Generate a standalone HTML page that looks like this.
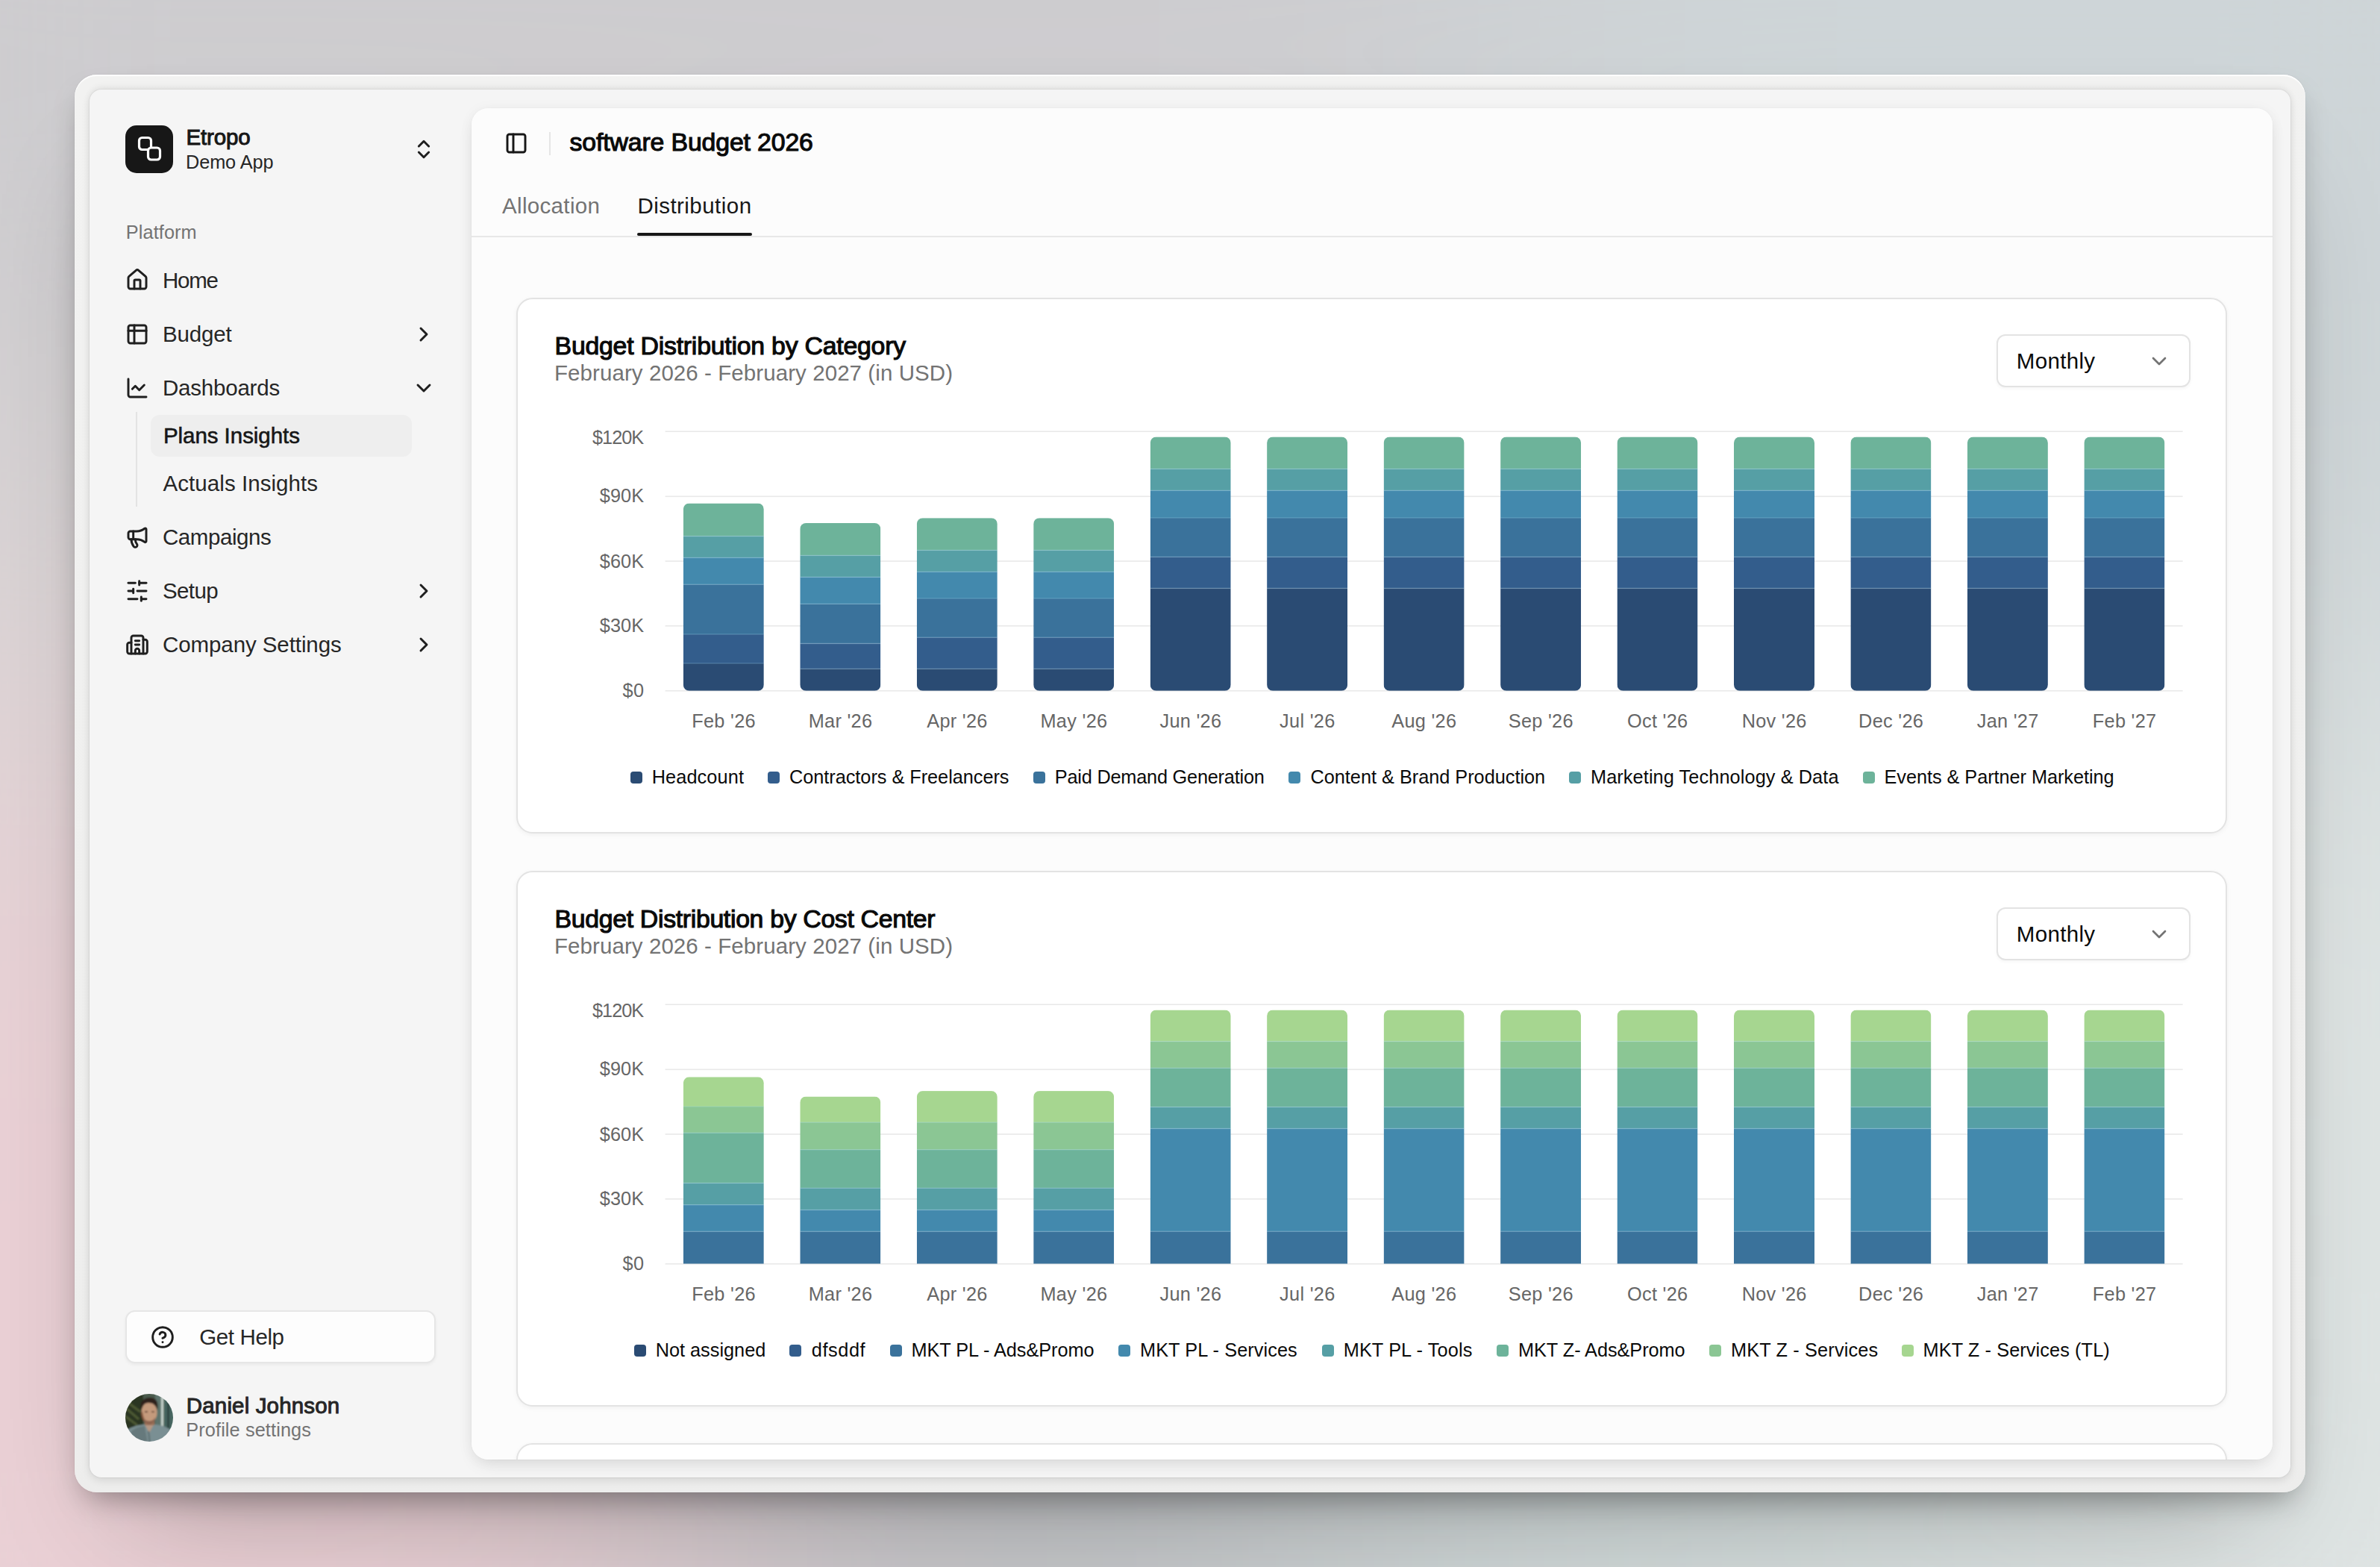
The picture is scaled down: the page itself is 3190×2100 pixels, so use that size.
<!DOCTYPE html>
<html><head><meta charset="utf-8"><title>software Budget 2026</title>
<style>
html,body{margin:0;padding:0}
body{width:3190px;height:2100px;overflow:hidden;position:relative;font-family:"Liberation Sans", sans-serif;background:#d2d1d3}
.bg{position:absolute;left:0;top:0;width:3190px;height:2100px}
.abs,.t,.ic{position:absolute}
.t{white-space:nowrap;line-height:1;font-family:"Liberation Sans", sans-serif}
.frame{position:absolute;left:100px;top:100px;width:2990px;height:1900px;border-radius:30px;
 background:linear-gradient(180deg,#f2f2f1,#ededec);box-shadow:inset 0 2px 1px rgba(255,255,255,0.9), 0 20px 40px -14px rgba(0,0,0,0.36), 0 90px 160px -70px rgba(0,0,0,0.28), 0 0 0 1px rgba(0,0,0,0.03)}
.win{position:absolute;left:120px;top:120px;width:2950px;height:1860px;border-radius:16px;background:#f5f5f5;
 box-shadow:0 0 0 1px rgba(0,0,0,0.04), 0 -4px 10px rgba(0,0,0,0.05), 0 4px 12px rgba(0,0,0,0.10)}
.main{position:absolute;left:632px;top:145px;width:2414px;height:1811px;border-radius:22px;background:#fcfcfc;overflow:hidden;
 }
.mainsh{position:absolute;left:632px;top:145px;width:2414px;height:1811px;border-radius:22px;
 box-shadow:0 2px 20px rgba(0,0,0,0.045), 0 10px 24px -6px rgba(0,0,0,0.11), 0 0 0 1px rgba(0,0,0,0.015)}
.card{position:absolute;box-sizing:border-box;background:#fff;border:2px solid #e3e3e3;border-radius:22px;
 box-shadow:0 2px 6px rgba(0,0,0,0.05)}
.dd{position:absolute;box-sizing:border-box;background:#fff;border:2px solid #e3e3e3;border-radius:12px;box-shadow:0 2px 4px rgba(0,0,0,0.04)}
</style></head><body>
<svg class="bg" viewBox="0 0 3190 2100" preserveAspectRatio="none">
<defs><filter id="bl" x="-20%" y="-20%" width="140%" height="140%"><feGaussianBlur stdDeviation="260"/></filter></defs>
<rect width="3190" height="2100" fill="#d1d0d2"/>
<g filter="url(#bl)">
<rect x="-400" y="-400" width="2400" height="900" fill="#cdcccf"/>
<rect x="2000" y="-400" width="1600" height="1300" fill="#ced5d8"/>
<rect x="-400" y="600" width="1300" height="500" fill="#dcd5d6"/>
<rect x="-400" y="1100" width="1300" height="1500" fill="#ebd0d5"/>
<rect x="900" y="1700" width="900" height="800" fill="#c3c5c8"/>
<rect x="1800" y="1700" width="900" height="800" fill="#d2dcdb"/>
<rect x="2600" y="900" width="1000" height="1600" fill="#dfe5e4"/>
</g></svg>
<div class="frame"></div>
<div class="win"></div>
<div class="abs" style="left:168px;top:168px;width:64px;height:64px;border-radius:15px;background:#171717"></div>
<svg class="ic" style="left:168px;top:168px;width:64px;height:64px" viewBox="0 0 64 64"><rect x="18.5" y="16.5" width="16" height="16" rx="4" fill="#171717" stroke="#fff" stroke-width="3.2"/><rect x="30.5" y="30" width="16" height="16" rx="4" fill="#171717" stroke="#fff" stroke-width="3.2"/></svg>
<div class="t" style="left:249.50px;top:168.93px;font-size:29.5px;color:#171717;font-weight:normal;letter-spacing:-0.176px;-webkit-text-stroke:1.00px #171717;">Etropo</div>
<div class="t" style="left:249.00px;top:204.58px;font-size:25.3px;color:#262626;font-weight:normal;letter-spacing:-0.096px;">Demo App</div>
<svg class="ic" style="left:551.5px;top:184.0px;width:32px;height:32px" viewBox="0 0 24 24" fill="none" stroke="#1f1f1f" stroke-width="2.2" stroke-linecap="round" stroke-linejoin="round"><path d="m7 15 5 5 5-5"/><path d="m7 9 5-5 5 5"/></svg>
<div class="t" style="left:168.80px;top:299.38px;font-size:25.3px;color:#737373;font-weight:normal;letter-spacing:0.100px;">Platform</div>
<svg class="ic" style="left:168.0px;top:359.2px;width:32px;height:32px" viewBox="0 0 24 24" fill="none" stroke="#1f1f1f" stroke-width="2.2" stroke-linecap="round" stroke-linejoin="round"><path d="M15 21v-8a1 1 0 0 0-1-1h-4a1 1 0 0 0-1 1v8"/><path d="M3 10a2 2 0 0 1 .709-1.528l7-5.999a2 2 0 0 1 2.582 0l7 5.999A2 2 0 0 1 21 10v9a2 2 0 0 1-2 2H5a2 2 0 0 1-2-2z"/></svg>
<div class="t" style="left:218.00px;top:361.03px;font-size:29.5px;color:#262626;font-weight:normal;letter-spacing:-1.250px;">Home</div>
<svg class="ic" style="left:168.0px;top:432.0px;width:32px;height:32px" viewBox="0 0 24 24" fill="none" stroke="#1f1f1f" stroke-width="2.2" stroke-linecap="round" stroke-linejoin="round"><rect x="3" y="3" width="18" height="18" rx="2"/><path d="M3 8.5h18"/><path d="M9 3v18"/></svg>
<div class="t" style="left:218.00px;top:433.03px;font-size:29.5px;color:#262626;font-weight:normal;letter-spacing:-0.160px;">Budget</div>
<svg class="ic" style="left:551.5px;top:432.0px;width:32px;height:32px" viewBox="0 0 24 24" fill="none" stroke="#1f1f1f" stroke-width="2.2" stroke-linecap="round" stroke-linejoin="round"><path d="m9 18 6-6-6-6"/></svg>
<svg class="ic" style="left:168.0px;top:503.5px;width:32px;height:32px" viewBox="0 0 24 24" fill="none" stroke="#1f1f1f" stroke-width="2.2" stroke-linecap="round" stroke-linejoin="round"><path d="M3 3v16a2 2 0 0 0 2 2h16"/><path d="m19 9-5 5-4-4-3 3"/></svg>
<div class="t" style="left:218.00px;top:504.53px;font-size:29.5px;color:#262626;font-weight:normal;letter-spacing:-0.214px;">Dashboards</div>
<svg class="ic" style="left:551.5px;top:503.5px;width:32px;height:32px" viewBox="0 0 24 24" fill="none" stroke="#1f1f1f" stroke-width="2.2" stroke-linecap="round" stroke-linejoin="round"><path d="m6 9 6 6 6-6"/></svg>
<svg class="ic" style="left:168.0px;top:703.5px;width:32px;height:32px" viewBox="0 0 24 24" fill="none" stroke="#1f1f1f" stroke-width="2.2" stroke-linecap="round" stroke-linejoin="round"><path d="M11 6a13 13 0 0 0 8.4-2.8A1 1 0 0 1 21 4v12a1 1 0 0 1-1.6.8A13 13 0 0 0 11 14H5a2 2 0 0 1-2-2V8a2 2 0 0 1 2-2z"/><path d="M6 14a12 12 0 0 0 2.4 7.2 2 2 0 0 0 3.2-2.4A8 8 0 0 1 10 14"/><path d="M8 6v8"/></svg>
<div class="t" style="left:218.00px;top:704.53px;font-size:29.5px;color:#262626;font-weight:normal;letter-spacing:-0.431px;">Campaigns</div>
<svg class="ic" style="left:168.0px;top:776.0px;width:32px;height:32px" viewBox="0 0 24 24" fill="none" stroke="#1f1f1f" stroke-width="2.2" stroke-linecap="round" stroke-linejoin="round"><path d="M21 4h-7"/><path d="M10 4H3"/><path d="M21 12h-9"/><path d="M8 12H3"/><path d="M21 20h-5"/><path d="M12 20H3"/><path d="M14 2v4"/><path d="M8 10v4"/><path d="M16 18v4"/></svg>
<div class="t" style="left:218.00px;top:777.03px;font-size:29.5px;color:#262626;font-weight:normal;letter-spacing:-0.606px;">Setup</div>
<svg class="ic" style="left:551.5px;top:776.0px;width:32px;height:32px" viewBox="0 0 24 24" fill="none" stroke="#1f1f1f" stroke-width="2.2" stroke-linecap="round" stroke-linejoin="round"><path d="m9 18 6-6-6-6"/></svg>
<svg class="ic" style="left:168.0px;top:847.5px;width:32px;height:32px" viewBox="0 0 24 24" fill="none" stroke="#1f1f1f" stroke-width="2.2" stroke-linecap="round" stroke-linejoin="round"><path d="M10 12h4"/><path d="M10 8h4"/><path d="M14 21v-3a2 2 0 0 0-4 0v3"/><path d="M6 10H4a2 2 0 0 0-2 2v7a2 2 0 0 0 2 2h16a2 2 0 0 0 2-2V9a2 2 0 0 0-2-2h-2"/><path d="M6 21V5a2 2 0 0 1 2-2h8a2 2 0 0 1 2 2v16"/></svg>
<div class="t" style="left:218.00px;top:848.53px;font-size:29.5px;color:#262626;font-weight:normal;letter-spacing:-0.087px;">Company Settings</div>
<svg class="ic" style="left:551.5px;top:847.5px;width:32px;height:32px" viewBox="0 0 24 24" fill="none" stroke="#1f1f1f" stroke-width="2.2" stroke-linecap="round" stroke-linejoin="round"><path d="m9 18 6-6-6-6"/></svg>
<div class="abs" style="left:182px;top:552px;width:2px;height:127px;background:#e3e3e3"></div>
<div class="abs" style="left:202px;top:556px;width:350px;height:56px;border-radius:12px;background:#eeeeee"></div>
<div class="t" style="left:218.89px;top:569.03px;font-size:29.5px;color:#171717;font-weight:normal;letter-spacing:-0.040px;-webkit-text-stroke:0.59px #171717;">Plans Insights</div>
<div class="t" style="left:218.60px;top:633.03px;font-size:29.5px;color:#262626;font-weight:normal;letter-spacing:0.052px;">Actuals Insights</div>
<div class="abs" style="left:168px;top:1756px;width:416px;height:71px;box-sizing:border-box;border-radius:13px;background:#fdfdfd;border:2px solid #e6e6e6;box-shadow:0 2px 4px rgba(0,0,0,0.05)"></div>
<svg class="ic" style="left:202.0px;top:1776.0px;width:32px;height:32px" viewBox="0 0 24 24" fill="none" stroke="#1f1f1f" stroke-width="2.2" stroke-linecap="round" stroke-linejoin="round"><circle cx="12" cy="12" r="10"/><path d="M9.09 9a3 3 0 0 1 5.83 1c0 2-3 3-3 3"/><path d="M12 17h.01"/></svg>
<div class="t" style="left:267.20px;top:1776.83px;font-size:29.5px;color:#262626;font-weight:normal;letter-spacing:-0.368px;">Get Help</div>
<svg class="ic" style="left:168px;top:1868px;width:64px;height:64px" viewBox="0 0 64 64">
<defs><clipPath id="av"><circle cx="32" cy="32" r="32"/></clipPath>
<filter id="avb" x="-10%" y="-10%" width="120%" height="120%"><feGaussianBlur stdDeviation="0.9"/></filter></defs>
<g clip-path="url(#av)"><g filter="url(#avb)">
<rect x="-4" y="-4" width="72" height="72" fill="#4a5a4c"/>
<rect x="-4" y="-4" width="28" height="72" fill="#2b3422"/>
<path d="M2 20 L18 34 M0 30 L16 42 M4 12 L20 24" stroke="#4d5a34" stroke-width="3"/>
<rect x="40" y="-4" width="10" height="72" fill="#5d736c"/>
<rect x="48" y="4" width="3" height="40" fill="#c5d2cc"/>
<rect x="52" y="-4" width="16" height="72" fill="#476660"/>
<rect x="56" y="-4" width="3" height="72" fill="#2f4541"/>
<path d="M-2 66 L-2 52 C6 44 16 42 24 41 L40 41 C50 42 60 46 66 52 L66 66Z" fill="#7a8f93"/>
<path d="M4 66 L8 50 C14 45 20 44 26 43 L30 66Z" fill="#66797b"/>
<path d="M26 41 L32 52 L38 41Z" fill="#b69884"/>
<path d="M31 50 L33 66" stroke="#46575a" stroke-width="1.2"/>
<rect x="26" y="32" width="13" height="10" fill="#9d7258"/>
<ellipse cx="32" cy="25" rx="10.5" ry="14" fill="#c49a7c"/>
<path d="M21.5 25 C21 33 25 40 32 40 C27 38 24 32 23 24Z" fill="#87573c"/>
<path d="M24 31 C26 38 38 38 40 31 C40 37 36 41 32 41 C28 41 24 37 24 31Z" fill="#8d6450"/>
<path d="M20.5 22 C19 8 27 5 33 5 C41 5 45 10 43 22 C41 15 37 12 31 12 C26 12 23 15 20.5 22Z" fill="#2d211a"/>
<ellipse cx="28" cy="24" rx="2.2" ry="1" fill="#5a3a2a"/>
<ellipse cx="37" cy="24" rx="2.2" ry="1" fill="#6a4a3a"/>
</g></g></svg>
<div class="t" style="left:249.80px;top:1869.03px;font-size:29.5px;color:#262626;font-weight:normal;letter-spacing:0.156px;-webkit-text-stroke:1.00px #262626;">Daniel Johnson</div>
<div class="t" style="left:249.30px;top:1904.28px;font-size:25.3px;color:#737373;font-weight:normal;letter-spacing:0.112px;">Profile settings</div>
<div class="mainsh"></div>
<div class="main">
<svg class="ic" style="left:44.1px;top:30.7px;width:32px;height:32px" viewBox="0 0 24 24" fill="none" stroke="#171717" stroke-width="2.2" stroke-linecap="round" stroke-linejoin="round"><rect width="18" height="18" x="3" y="3" rx="2"/><path d="M9 3v18"/></svg>
<div class="abs" style="left:104px;top:32px;width:2px;height:31px;background:#e5e5e5"></div>
<div class="t" style="left:131.57px;top:29.19px;font-size:33.8px;color:#0a0a0a;font-weight:normal;letter-spacing:-0.133px;-webkit-text-stroke:1.15px #0a0a0a;">software Budget 2026</div>
<div class="t" style="left:41.00px;top:115.93px;font-size:29.5px;color:#737373;font-weight:normal;letter-spacing:0.336px;">Allocation</div>
<div class="t" style="left:222.40px;top:115.93px;font-size:29.5px;color:#171717;font-weight:normal;letter-spacing:0.464px;">Distribution</div>
<div class="abs" style="left:222px;top:167px;width:154px;height:4px;border-radius:2px;background:#171717"></div>
<div class="abs" style="left:0px;top:171px;width:100%;height:2px;background:#e8e8e8"></div>
<div class="card" style="left:60px;top:253.8px;width:2293px;height:718px"></div>
<div class="t" style="left:111.57px;top:302.09px;font-size:33.8px;color:#0a0a0a;font-weight:normal;letter-spacing:-0.222px;-webkit-text-stroke:1.15px #0a0a0a;">Budget Distribution by Category</div>
<div class="t" style="left:111.00px;top:339.73px;font-size:29.5px;color:#737373;font-weight:normal;letter-spacing:0.074px;">February 2026 - February 2027 (in USD)</div>
<div class="dd" style="left:2044px;top:303.0px;width:260px;height:71px"></div>
<div class="t" style="left:2070.80px;top:324.23px;font-size:29.5px;color:#0a0a0a;font-weight:normal;letter-spacing:0.325px;">Monthly</div>
<svg class="ic" style="left:2246.0px;top:323.0px;width:32px;height:32px" viewBox="0 0 24 24" fill="none" stroke="#737373" stroke-width="2" stroke-linecap="round" stroke-linejoin="round"><path d="m6 9 6 6 6-6"/></svg>
<svg class="ic" style="left:0;top:0;width:2414px;height:1812px;overflow:visible" viewBox="632 145 2414 1812">
<rect x="891.6" y="577.4" width="2034" height="1.6" fill="#e9e9e9"/>
<rect x="891.6" y="664.5" width="2034" height="1.6" fill="#e9e9e9"/>
<rect x="891.6" y="751.2" width="2034" height="1.6" fill="#e9e9e9"/>
<rect x="891.6" y="838.0" width="2034" height="1.6" fill="#e9e9e9"/>
<rect x="891.6" y="925.0" width="2034" height="1.6" fill="#e9e9e9"/>
<clipPath id="cb398_0"><rect x="915.8" y="674.5" width="108" height="251.3" rx="8"/></clipPath><g clip-path="url(#cb398_0)">
<rect x="915.8" y="674.5" width="108" height="44.1" fill="#6db39a"/>
<rect x="915.8" y="718.6" width="108" height="28.7" fill="#569fa5"/>
<rect x="915.8" y="747.3" width="108" height="35.9" fill="#4389ad"/>
<rect x="915.8" y="783.2" width="108" height="66.8" fill="#3a729b"/>
<rect x="915.8" y="850.0" width="108" height="39.0" fill="#335d8c"/>
<rect x="915.8" y="889.0" width="108" height="36.8" fill="#2a4b73"/>
<rect x="915.8" y="717.8" width="108" height="1.6" fill="#a8e0f5" fill-opacity="0.22"/>
<rect x="915.8" y="746.5" width="108" height="1.6" fill="#a8e0f5" fill-opacity="0.22"/>
<rect x="915.8" y="782.4" width="108" height="1.6" fill="#a8e0f5" fill-opacity="0.22"/>
<rect x="915.8" y="849.2" width="108" height="1.6" fill="#a8e0f5" fill-opacity="0.22"/>
<rect x="915.8" y="888.2" width="108" height="1.6" fill="#a8e0f5" fill-opacity="0.22"/>
</g>
<clipPath id="cb398_1"><rect x="1072.3" y="700.9" width="108" height="224.9" rx="8"/></clipPath><g clip-path="url(#cb398_1)">
<rect x="1072.3" y="700.9" width="108" height="43.5" fill="#6db39a"/>
<rect x="1072.3" y="744.4" width="108" height="29.0" fill="#569fa5"/>
<rect x="1072.3" y="773.4" width="108" height="35.9" fill="#4389ad"/>
<rect x="1072.3" y="809.3" width="108" height="53.1" fill="#3a729b"/>
<rect x="1072.3" y="862.4" width="108" height="33.9" fill="#335d8c"/>
<rect x="1072.3" y="896.3" width="108" height="29.5" fill="#2a4b73"/>
<rect x="1072.3" y="743.6" width="108" height="1.6" fill="#a8e0f5" fill-opacity="0.22"/>
<rect x="1072.3" y="772.6" width="108" height="1.6" fill="#a8e0f5" fill-opacity="0.22"/>
<rect x="1072.3" y="808.5" width="108" height="1.6" fill="#a8e0f5" fill-opacity="0.22"/>
<rect x="1072.3" y="861.6" width="108" height="1.6" fill="#a8e0f5" fill-opacity="0.22"/>
<rect x="1072.3" y="895.5" width="108" height="1.6" fill="#a8e0f5" fill-opacity="0.22"/>
</g>
<clipPath id="cb398_2"><rect x="1228.8" y="694.2" width="108" height="231.6" rx="8"/></clipPath><g clip-path="url(#cb398_2)">
<rect x="1228.8" y="694.2" width="108" height="43.2" fill="#6db39a"/>
<rect x="1228.8" y="737.4" width="108" height="28.9" fill="#569fa5"/>
<rect x="1228.8" y="766.3" width="108" height="35.7" fill="#4389ad"/>
<rect x="1228.8" y="802.0" width="108" height="52.2" fill="#3a729b"/>
<rect x="1228.8" y="854.2" width="108" height="42.1" fill="#335d8c"/>
<rect x="1228.8" y="896.3" width="108" height="29.5" fill="#2a4b73"/>
<rect x="1228.8" y="736.6" width="108" height="1.6" fill="#a8e0f5" fill-opacity="0.22"/>
<rect x="1228.8" y="765.5" width="108" height="1.6" fill="#a8e0f5" fill-opacity="0.22"/>
<rect x="1228.8" y="801.2" width="108" height="1.6" fill="#a8e0f5" fill-opacity="0.22"/>
<rect x="1228.8" y="853.4" width="108" height="1.6" fill="#a8e0f5" fill-opacity="0.22"/>
<rect x="1228.8" y="895.5" width="108" height="1.6" fill="#a8e0f5" fill-opacity="0.22"/>
</g>
<clipPath id="cb398_3"><rect x="1385.2" y="694.2" width="108" height="231.6" rx="8"/></clipPath><g clip-path="url(#cb398_3)">
<rect x="1385.2" y="694.2" width="108" height="43.2" fill="#6db39a"/>
<rect x="1385.2" y="737.4" width="108" height="28.9" fill="#569fa5"/>
<rect x="1385.2" y="766.3" width="108" height="35.7" fill="#4389ad"/>
<rect x="1385.2" y="802.0" width="108" height="52.2" fill="#3a729b"/>
<rect x="1385.2" y="854.2" width="108" height="42.1" fill="#335d8c"/>
<rect x="1385.2" y="896.3" width="108" height="29.5" fill="#2a4b73"/>
<rect x="1385.2" y="736.6" width="108" height="1.6" fill="#a8e0f5" fill-opacity="0.22"/>
<rect x="1385.2" y="765.5" width="108" height="1.6" fill="#a8e0f5" fill-opacity="0.22"/>
<rect x="1385.2" y="801.2" width="108" height="1.6" fill="#a8e0f5" fill-opacity="0.22"/>
<rect x="1385.2" y="853.4" width="108" height="1.6" fill="#a8e0f5" fill-opacity="0.22"/>
<rect x="1385.2" y="895.5" width="108" height="1.6" fill="#a8e0f5" fill-opacity="0.22"/>
</g>
<clipPath id="cb398_4"><rect x="1541.7" y="585.4" width="108" height="340.4" rx="8"/></clipPath><g clip-path="url(#cb398_4)">
<rect x="1541.7" y="585.4" width="108" height="43.0" fill="#6db39a"/>
<rect x="1541.7" y="628.4" width="108" height="28.9" fill="#569fa5"/>
<rect x="1541.7" y="657.3" width="108" height="36.7" fill="#4389ad"/>
<rect x="1541.7" y="694.0" width="108" height="52.3" fill="#3a729b"/>
<rect x="1541.7" y="746.3" width="108" height="42.1" fill="#335d8c"/>
<rect x="1541.7" y="788.4" width="108" height="137.4" fill="#2a4b73"/>
<rect x="1541.7" y="627.6" width="108" height="1.6" fill="#a8e0f5" fill-opacity="0.22"/>
<rect x="1541.7" y="656.5" width="108" height="1.6" fill="#a8e0f5" fill-opacity="0.22"/>
<rect x="1541.7" y="693.2" width="108" height="1.6" fill="#a8e0f5" fill-opacity="0.22"/>
<rect x="1541.7" y="745.5" width="108" height="1.6" fill="#a8e0f5" fill-opacity="0.22"/>
<rect x="1541.7" y="787.6" width="108" height="1.6" fill="#a8e0f5" fill-opacity="0.22"/>
</g>
<clipPath id="cb398_5"><rect x="1698.1" y="585.4" width="108" height="340.4" rx="8"/></clipPath><g clip-path="url(#cb398_5)">
<rect x="1698.1" y="585.4" width="108" height="43.0" fill="#6db39a"/>
<rect x="1698.1" y="628.4" width="108" height="28.9" fill="#569fa5"/>
<rect x="1698.1" y="657.3" width="108" height="36.7" fill="#4389ad"/>
<rect x="1698.1" y="694.0" width="108" height="52.3" fill="#3a729b"/>
<rect x="1698.1" y="746.3" width="108" height="42.1" fill="#335d8c"/>
<rect x="1698.1" y="788.4" width="108" height="137.4" fill="#2a4b73"/>
<rect x="1698.1" y="627.6" width="108" height="1.6" fill="#a8e0f5" fill-opacity="0.22"/>
<rect x="1698.1" y="656.5" width="108" height="1.6" fill="#a8e0f5" fill-opacity="0.22"/>
<rect x="1698.1" y="693.2" width="108" height="1.6" fill="#a8e0f5" fill-opacity="0.22"/>
<rect x="1698.1" y="745.5" width="108" height="1.6" fill="#a8e0f5" fill-opacity="0.22"/>
<rect x="1698.1" y="787.6" width="108" height="1.6" fill="#a8e0f5" fill-opacity="0.22"/>
</g>
<clipPath id="cb398_6"><rect x="1854.6" y="585.4" width="108" height="340.4" rx="8"/></clipPath><g clip-path="url(#cb398_6)">
<rect x="1854.6" y="585.4" width="108" height="43.0" fill="#6db39a"/>
<rect x="1854.6" y="628.4" width="108" height="28.9" fill="#569fa5"/>
<rect x="1854.6" y="657.3" width="108" height="36.7" fill="#4389ad"/>
<rect x="1854.6" y="694.0" width="108" height="52.3" fill="#3a729b"/>
<rect x="1854.6" y="746.3" width="108" height="42.1" fill="#335d8c"/>
<rect x="1854.6" y="788.4" width="108" height="137.4" fill="#2a4b73"/>
<rect x="1854.6" y="627.6" width="108" height="1.6" fill="#a8e0f5" fill-opacity="0.22"/>
<rect x="1854.6" y="656.5" width="108" height="1.6" fill="#a8e0f5" fill-opacity="0.22"/>
<rect x="1854.6" y="693.2" width="108" height="1.6" fill="#a8e0f5" fill-opacity="0.22"/>
<rect x="1854.6" y="745.5" width="108" height="1.6" fill="#a8e0f5" fill-opacity="0.22"/>
<rect x="1854.6" y="787.6" width="108" height="1.6" fill="#a8e0f5" fill-opacity="0.22"/>
</g>
<clipPath id="cb398_7"><rect x="2011.1" y="585.4" width="108" height="340.4" rx="8"/></clipPath><g clip-path="url(#cb398_7)">
<rect x="2011.1" y="585.4" width="108" height="43.0" fill="#6db39a"/>
<rect x="2011.1" y="628.4" width="108" height="28.9" fill="#569fa5"/>
<rect x="2011.1" y="657.3" width="108" height="36.7" fill="#4389ad"/>
<rect x="2011.1" y="694.0" width="108" height="52.3" fill="#3a729b"/>
<rect x="2011.1" y="746.3" width="108" height="42.1" fill="#335d8c"/>
<rect x="2011.1" y="788.4" width="108" height="137.4" fill="#2a4b73"/>
<rect x="2011.1" y="627.6" width="108" height="1.6" fill="#a8e0f5" fill-opacity="0.22"/>
<rect x="2011.1" y="656.5" width="108" height="1.6" fill="#a8e0f5" fill-opacity="0.22"/>
<rect x="2011.1" y="693.2" width="108" height="1.6" fill="#a8e0f5" fill-opacity="0.22"/>
<rect x="2011.1" y="745.5" width="108" height="1.6" fill="#a8e0f5" fill-opacity="0.22"/>
<rect x="2011.1" y="787.6" width="108" height="1.6" fill="#a8e0f5" fill-opacity="0.22"/>
</g>
<clipPath id="cb398_8"><rect x="2167.5" y="585.4" width="108" height="340.4" rx="8"/></clipPath><g clip-path="url(#cb398_8)">
<rect x="2167.5" y="585.4" width="108" height="43.0" fill="#6db39a"/>
<rect x="2167.5" y="628.4" width="108" height="28.9" fill="#569fa5"/>
<rect x="2167.5" y="657.3" width="108" height="36.7" fill="#4389ad"/>
<rect x="2167.5" y="694.0" width="108" height="52.3" fill="#3a729b"/>
<rect x="2167.5" y="746.3" width="108" height="42.1" fill="#335d8c"/>
<rect x="2167.5" y="788.4" width="108" height="137.4" fill="#2a4b73"/>
<rect x="2167.5" y="627.6" width="108" height="1.6" fill="#a8e0f5" fill-opacity="0.22"/>
<rect x="2167.5" y="656.5" width="108" height="1.6" fill="#a8e0f5" fill-opacity="0.22"/>
<rect x="2167.5" y="693.2" width="108" height="1.6" fill="#a8e0f5" fill-opacity="0.22"/>
<rect x="2167.5" y="745.5" width="108" height="1.6" fill="#a8e0f5" fill-opacity="0.22"/>
<rect x="2167.5" y="787.6" width="108" height="1.6" fill="#a8e0f5" fill-opacity="0.22"/>
</g>
<clipPath id="cb398_9"><rect x="2324.0" y="585.4" width="108" height="340.4" rx="8"/></clipPath><g clip-path="url(#cb398_9)">
<rect x="2324.0" y="585.4" width="108" height="43.0" fill="#6db39a"/>
<rect x="2324.0" y="628.4" width="108" height="28.9" fill="#569fa5"/>
<rect x="2324.0" y="657.3" width="108" height="36.7" fill="#4389ad"/>
<rect x="2324.0" y="694.0" width="108" height="52.3" fill="#3a729b"/>
<rect x="2324.0" y="746.3" width="108" height="42.1" fill="#335d8c"/>
<rect x="2324.0" y="788.4" width="108" height="137.4" fill="#2a4b73"/>
<rect x="2324.0" y="627.6" width="108" height="1.6" fill="#a8e0f5" fill-opacity="0.22"/>
<rect x="2324.0" y="656.5" width="108" height="1.6" fill="#a8e0f5" fill-opacity="0.22"/>
<rect x="2324.0" y="693.2" width="108" height="1.6" fill="#a8e0f5" fill-opacity="0.22"/>
<rect x="2324.0" y="745.5" width="108" height="1.6" fill="#a8e0f5" fill-opacity="0.22"/>
<rect x="2324.0" y="787.6" width="108" height="1.6" fill="#a8e0f5" fill-opacity="0.22"/>
</g>
<clipPath id="cb398_10"><rect x="2480.4" y="585.4" width="108" height="340.4" rx="8"/></clipPath><g clip-path="url(#cb398_10)">
<rect x="2480.4" y="585.4" width="108" height="43.0" fill="#6db39a"/>
<rect x="2480.4" y="628.4" width="108" height="28.9" fill="#569fa5"/>
<rect x="2480.4" y="657.3" width="108" height="36.7" fill="#4389ad"/>
<rect x="2480.4" y="694.0" width="108" height="52.3" fill="#3a729b"/>
<rect x="2480.4" y="746.3" width="108" height="42.1" fill="#335d8c"/>
<rect x="2480.4" y="788.4" width="108" height="137.4" fill="#2a4b73"/>
<rect x="2480.4" y="627.6" width="108" height="1.6" fill="#a8e0f5" fill-opacity="0.22"/>
<rect x="2480.4" y="656.5" width="108" height="1.6" fill="#a8e0f5" fill-opacity="0.22"/>
<rect x="2480.4" y="693.2" width="108" height="1.6" fill="#a8e0f5" fill-opacity="0.22"/>
<rect x="2480.4" y="745.5" width="108" height="1.6" fill="#a8e0f5" fill-opacity="0.22"/>
<rect x="2480.4" y="787.6" width="108" height="1.6" fill="#a8e0f5" fill-opacity="0.22"/>
</g>
<clipPath id="cb398_11"><rect x="2636.9" y="585.4" width="108" height="340.4" rx="8"/></clipPath><g clip-path="url(#cb398_11)">
<rect x="2636.9" y="585.4" width="108" height="43.0" fill="#6db39a"/>
<rect x="2636.9" y="628.4" width="108" height="28.9" fill="#569fa5"/>
<rect x="2636.9" y="657.3" width="108" height="36.7" fill="#4389ad"/>
<rect x="2636.9" y="694.0" width="108" height="52.3" fill="#3a729b"/>
<rect x="2636.9" y="746.3" width="108" height="42.1" fill="#335d8c"/>
<rect x="2636.9" y="788.4" width="108" height="137.4" fill="#2a4b73"/>
<rect x="2636.9" y="627.6" width="108" height="1.6" fill="#a8e0f5" fill-opacity="0.22"/>
<rect x="2636.9" y="656.5" width="108" height="1.6" fill="#a8e0f5" fill-opacity="0.22"/>
<rect x="2636.9" y="693.2" width="108" height="1.6" fill="#a8e0f5" fill-opacity="0.22"/>
<rect x="2636.9" y="745.5" width="108" height="1.6" fill="#a8e0f5" fill-opacity="0.22"/>
<rect x="2636.9" y="787.6" width="108" height="1.6" fill="#a8e0f5" fill-opacity="0.22"/>
</g>
<clipPath id="cb398_12"><rect x="2793.4" y="585.4" width="108" height="340.4" rx="8"/></clipPath><g clip-path="url(#cb398_12)">
<rect x="2793.4" y="585.4" width="108" height="43.0" fill="#6db39a"/>
<rect x="2793.4" y="628.4" width="108" height="28.9" fill="#569fa5"/>
<rect x="2793.4" y="657.3" width="108" height="36.7" fill="#4389ad"/>
<rect x="2793.4" y="694.0" width="108" height="52.3" fill="#3a729b"/>
<rect x="2793.4" y="746.3" width="108" height="42.1" fill="#335d8c"/>
<rect x="2793.4" y="788.4" width="108" height="137.4" fill="#2a4b73"/>
<rect x="2793.4" y="627.6" width="108" height="1.6" fill="#a8e0f5" fill-opacity="0.22"/>
<rect x="2793.4" y="656.5" width="108" height="1.6" fill="#a8e0f5" fill-opacity="0.22"/>
<rect x="2793.4" y="693.2" width="108" height="1.6" fill="#a8e0f5" fill-opacity="0.22"/>
<rect x="2793.4" y="745.5" width="108" height="1.6" fill="#a8e0f5" fill-opacity="0.22"/>
<rect x="2793.4" y="787.6" width="108" height="1.6" fill="#a8e0f5" fill-opacity="0.22"/>
</g>
</svg>
<div class="t" style="left:162.00px;top:428.58px;font-size:25.3px;color:#666666;font-weight:normal;letter-spacing:-1.000px;">$120K</div>
<div class="t" style="left:171.80px;top:507.28px;font-size:25.3px;color:#666666;font-weight:normal;letter-spacing:0.067px;">$90K</div>
<div class="t" style="left:171.80px;top:594.58px;font-size:25.3px;color:#666666;font-weight:normal;letter-spacing:0.067px;">$60K</div>
<div class="t" style="left:171.80px;top:681.38px;font-size:25.3px;color:#666666;font-weight:normal;letter-spacing:0.067px;">$30K</div>
<div class="t" style="left:202.60px;top:768.38px;font-size:25.3px;color:#666666;font-weight:normal;letter-spacing:0.275px;">$0</div>
<div class="t" style="left:295.24px;top:808.78px;font-size:25.3px;color:#666666;font-weight:normal;letter-spacing:0.300px;">Feb &#x27;26</div>
<div class="t" style="left:451.70px;top:808.78px;font-size:25.3px;color:#666666;font-weight:normal;letter-spacing:0.300px;">Mar &#x27;26</div>
<div class="t" style="left:610.23px;top:808.78px;font-size:25.3px;color:#666666;font-weight:normal;letter-spacing:0.300px;">Apr &#x27;26</div>
<div class="t" style="left:762.50px;top:808.78px;font-size:25.3px;color:#666666;font-weight:normal;letter-spacing:0.300px;">May &#x27;26</div>
<div class="t" style="left:922.46px;top:808.78px;font-size:25.3px;color:#666666;font-weight:normal;letter-spacing:0.300px;">Jun &#x27;26</div>
<div class="t" style="left:1083.11px;top:808.78px;font-size:25.3px;color:#666666;font-weight:normal;letter-spacing:0.300px;">Jul &#x27;26</div>
<div class="t" style="left:1233.26px;top:808.78px;font-size:25.3px;color:#666666;font-weight:normal;letter-spacing:0.300px;">Aug &#x27;26</div>
<div class="t" style="left:1389.72px;top:808.78px;font-size:25.3px;color:#666666;font-weight:normal;letter-spacing:0.300px;">Sep &#x27;26</div>
<div class="t" style="left:1549.00px;top:808.78px;font-size:25.3px;color:#666666;font-weight:normal;letter-spacing:0.300px;">Oct &#x27;26</div>
<div class="t" style="left:1702.65px;top:808.78px;font-size:25.3px;color:#666666;font-weight:normal;letter-spacing:0.300px;">Nov &#x27;26</div>
<div class="t" style="left:1859.11px;top:808.78px;font-size:25.3px;color:#666666;font-weight:normal;letter-spacing:0.300px;">Dec &#x27;26</div>
<div class="t" style="left:2017.70px;top:808.78px;font-size:25.3px;color:#666666;font-weight:normal;letter-spacing:0.300px;">Jan &#x27;27</div>
<div class="t" style="left:2172.78px;top:808.78px;font-size:25.3px;color:#666666;font-weight:normal;letter-spacing:0.300px;">Feb &#x27;27</div>
<div class="abs" style="left:212.6px;top:889.0px;width:16px;height:16px;border-radius:4px;background:#2a4b73"></div>
<div class="t" style="left:241.70px;top:883.58px;font-size:25.3px;color:#0a0a0a;font-weight:normal;letter-spacing:0.109px;">Headcount</div>
<div class="abs" style="left:397.0px;top:889.0px;width:16px;height:16px;border-radius:4px;background:#335d8c"></div>
<div class="t" style="left:426.00px;top:883.58px;font-size:25.3px;color:#0a0a0a;font-weight:normal;letter-spacing:-0.031px;">Contractors &amp; Freelancers</div>
<div class="abs" style="left:752.7px;top:889.0px;width:16px;height:16px;border-radius:4px;background:#3a729b"></div>
<div class="t" style="left:781.80px;top:883.58px;font-size:25.3px;color:#0a0a0a;font-weight:normal;letter-spacing:-0.210px;">Paid Demand Generation</div>
<div class="abs" style="left:1094.7px;top:889.0px;width:16px;height:16px;border-radius:4px;background:#4389ad"></div>
<div class="t" style="left:1124.50px;top:883.58px;font-size:25.3px;color:#0a0a0a;font-weight:normal;letter-spacing:-0.015px;">Content &amp; Brand Production</div>
<div class="abs" style="left:1471.4px;top:889.0px;width:16px;height:16px;border-radius:4px;background:#569fa5"></div>
<div class="t" style="left:1500.00px;top:883.58px;font-size:25.3px;color:#0a0a0a;font-weight:normal;letter-spacing:0.096px;">Marketing Technology &amp; Data</div>
<div class="abs" style="left:1864.8px;top:889.0px;width:16px;height:16px;border-radius:4px;background:#6db39a"></div>
<div class="t" style="left:1893.50px;top:883.58px;font-size:25.3px;color:#0a0a0a;font-weight:normal;letter-spacing:-0.050px;">Events &amp; Partner Marketing</div>
<div class="card" style="left:60px;top:1021.8px;width:2293px;height:718px"></div>
<div class="t" style="left:111.57px;top:1070.09px;font-size:33.8px;color:#0a0a0a;font-weight:normal;letter-spacing:-0.317px;-webkit-text-stroke:1.15px #0a0a0a;">Budget Distribution by Cost Center</div>
<div class="t" style="left:111.00px;top:1107.73px;font-size:29.5px;color:#737373;font-weight:normal;letter-spacing:0.074px;">February 2026 - February 2027 (in USD)</div>
<div class="dd" style="left:2044px;top:1071.0px;width:260px;height:71px"></div>
<div class="t" style="left:2070.80px;top:1092.23px;font-size:29.5px;color:#0a0a0a;font-weight:normal;letter-spacing:0.325px;">Monthly</div>
<svg class="ic" style="left:2246.0px;top:1091.0px;width:32px;height:32px" viewBox="0 0 24 24" fill="none" stroke="#737373" stroke-width="2" stroke-linecap="round" stroke-linejoin="round"><path d="m6 9 6 6 6-6"/></svg>
<svg class="ic" style="left:0;top:0;width:2414px;height:1812px;overflow:visible" viewBox="632 145 2414 1812">
<rect x="891.6" y="1345.4" width="2034" height="1.6" fill="#e9e9e9"/>
<rect x="891.6" y="1432.5" width="2034" height="1.6" fill="#e9e9e9"/>
<rect x="891.6" y="1519.2" width="2034" height="1.6" fill="#e9e9e9"/>
<rect x="891.6" y="1606.0" width="2034" height="1.6" fill="#e9e9e9"/>
<rect x="891.6" y="1693.0" width="2034" height="1.6" fill="#e9e9e9"/>
<clipPath id="cb1166_0"><path d="M915.8 1693.7V1451.3a8 8 0 0 1 8 -8h92a8 8 0 0 1 8 8V1693.7Z"/></clipPath><g clip-path="url(#cb1166_0)">
<rect x="915.8" y="1443.3" width="108" height="39.7" fill="#a6d690"/>
<rect x="915.8" y="1483.0" width="108" height="35.2" fill="#8bc694"/>
<rect x="915.8" y="1518.2" width="108" height="67.3" fill="#6db39a"/>
<rect x="915.8" y="1585.5" width="108" height="29.2" fill="#569fa5"/>
<rect x="915.8" y="1614.7" width="108" height="35.6" fill="#4389ad"/>
<rect x="915.8" y="1650.3" width="108" height="43.4" fill="#3a729b"/>
<rect x="915.8" y="1482.2" width="108" height="1.6" fill="#a8e0f5" fill-opacity="0.22"/>
<rect x="915.8" y="1517.4" width="108" height="1.6" fill="#a8e0f5" fill-opacity="0.22"/>
<rect x="915.8" y="1584.7" width="108" height="1.6" fill="#a8e0f5" fill-opacity="0.22"/>
<rect x="915.8" y="1613.9" width="108" height="1.6" fill="#a8e0f5" fill-opacity="0.22"/>
<rect x="915.8" y="1649.5" width="108" height="1.6" fill="#a8e0f5" fill-opacity="0.22"/>
</g>
<clipPath id="cb1166_1"><path d="M1072.3 1693.7V1477.5a8 8 0 0 1 8 -8h92a8 8 0 0 1 8 8V1693.7Z"/></clipPath><g clip-path="url(#cb1166_1)">
<rect x="1072.3" y="1469.5" width="108" height="34.6" fill="#a6d690"/>
<rect x="1072.3" y="1504.1" width="108" height="36.7" fill="#8bc694"/>
<rect x="1072.3" y="1540.8" width="108" height="51.4" fill="#6db39a"/>
<rect x="1072.3" y="1592.2" width="108" height="29.2" fill="#569fa5"/>
<rect x="1072.3" y="1621.4" width="108" height="28.9" fill="#4389ad"/>
<rect x="1072.3" y="1650.3" width="108" height="43.4" fill="#3a729b"/>
<rect x="1072.3" y="1503.3" width="108" height="1.6" fill="#a8e0f5" fill-opacity="0.22"/>
<rect x="1072.3" y="1540.0" width="108" height="1.6" fill="#a8e0f5" fill-opacity="0.22"/>
<rect x="1072.3" y="1591.4" width="108" height="1.6" fill="#a8e0f5" fill-opacity="0.22"/>
<rect x="1072.3" y="1620.6" width="108" height="1.6" fill="#a8e0f5" fill-opacity="0.22"/>
<rect x="1072.3" y="1649.5" width="108" height="1.6" fill="#a8e0f5" fill-opacity="0.22"/>
</g>
<clipPath id="cb1166_2"><path d="M1228.8 1693.7V1470.1a8 8 0 0 1 8 -8h92a8 8 0 0 1 8 8V1693.7Z"/></clipPath><g clip-path="url(#cb1166_2)">
<rect x="1228.8" y="1462.1" width="108" height="42.0" fill="#a6d690"/>
<rect x="1228.8" y="1504.1" width="108" height="36.7" fill="#8bc694"/>
<rect x="1228.8" y="1540.8" width="108" height="51.4" fill="#6db39a"/>
<rect x="1228.8" y="1592.2" width="108" height="29.2" fill="#569fa5"/>
<rect x="1228.8" y="1621.4" width="108" height="28.9" fill="#4389ad"/>
<rect x="1228.8" y="1650.3" width="108" height="43.4" fill="#3a729b"/>
<rect x="1228.8" y="1503.3" width="108" height="1.6" fill="#a8e0f5" fill-opacity="0.22"/>
<rect x="1228.8" y="1540.0" width="108" height="1.6" fill="#a8e0f5" fill-opacity="0.22"/>
<rect x="1228.8" y="1591.4" width="108" height="1.6" fill="#a8e0f5" fill-opacity="0.22"/>
<rect x="1228.8" y="1620.6" width="108" height="1.6" fill="#a8e0f5" fill-opacity="0.22"/>
<rect x="1228.8" y="1649.5" width="108" height="1.6" fill="#a8e0f5" fill-opacity="0.22"/>
</g>
<clipPath id="cb1166_3"><path d="M1385.2 1693.7V1470.1a8 8 0 0 1 8 -8h92a8 8 0 0 1 8 8V1693.7Z"/></clipPath><g clip-path="url(#cb1166_3)">
<rect x="1385.2" y="1462.1" width="108" height="42.0" fill="#a6d690"/>
<rect x="1385.2" y="1504.1" width="108" height="36.7" fill="#8bc694"/>
<rect x="1385.2" y="1540.8" width="108" height="51.4" fill="#6db39a"/>
<rect x="1385.2" y="1592.2" width="108" height="29.2" fill="#569fa5"/>
<rect x="1385.2" y="1621.4" width="108" height="28.9" fill="#4389ad"/>
<rect x="1385.2" y="1650.3" width="108" height="43.4" fill="#3a729b"/>
<rect x="1385.2" y="1503.3" width="108" height="1.6" fill="#a8e0f5" fill-opacity="0.22"/>
<rect x="1385.2" y="1540.0" width="108" height="1.6" fill="#a8e0f5" fill-opacity="0.22"/>
<rect x="1385.2" y="1591.4" width="108" height="1.6" fill="#a8e0f5" fill-opacity="0.22"/>
<rect x="1385.2" y="1620.6" width="108" height="1.6" fill="#a8e0f5" fill-opacity="0.22"/>
<rect x="1385.2" y="1649.5" width="108" height="1.6" fill="#a8e0f5" fill-opacity="0.22"/>
</g>
<clipPath id="cb1166_4"><path d="M1541.7 1693.7V1361.5a8 8 0 0 1 8 -8h92a8 8 0 0 1 8 8V1693.7Z"/></clipPath><g clip-path="url(#cb1166_4)">
<rect x="1541.7" y="1353.5" width="108" height="42.2" fill="#a6d690"/>
<rect x="1541.7" y="1395.7" width="108" height="35.6" fill="#8bc694"/>
<rect x="1541.7" y="1431.3" width="108" height="52.3" fill="#6db39a"/>
<rect x="1541.7" y="1483.6" width="108" height="28.8" fill="#569fa5"/>
<rect x="1541.7" y="1512.4" width="108" height="137.8" fill="#4389ad"/>
<rect x="1541.7" y="1650.2" width="108" height="43.5" fill="#3a729b"/>
<rect x="1541.7" y="1394.9" width="108" height="1.6" fill="#a8e0f5" fill-opacity="0.22"/>
<rect x="1541.7" y="1430.5" width="108" height="1.6" fill="#a8e0f5" fill-opacity="0.22"/>
<rect x="1541.7" y="1482.8" width="108" height="1.6" fill="#a8e0f5" fill-opacity="0.22"/>
<rect x="1541.7" y="1511.6" width="108" height="1.6" fill="#a8e0f5" fill-opacity="0.22"/>
<rect x="1541.7" y="1649.4" width="108" height="1.6" fill="#a8e0f5" fill-opacity="0.22"/>
</g>
<clipPath id="cb1166_5"><path d="M1698.1 1693.7V1361.5a8 8 0 0 1 8 -8h92a8 8 0 0 1 8 8V1693.7Z"/></clipPath><g clip-path="url(#cb1166_5)">
<rect x="1698.1" y="1353.5" width="108" height="42.2" fill="#a6d690"/>
<rect x="1698.1" y="1395.7" width="108" height="35.6" fill="#8bc694"/>
<rect x="1698.1" y="1431.3" width="108" height="52.3" fill="#6db39a"/>
<rect x="1698.1" y="1483.6" width="108" height="28.8" fill="#569fa5"/>
<rect x="1698.1" y="1512.4" width="108" height="137.8" fill="#4389ad"/>
<rect x="1698.1" y="1650.2" width="108" height="43.5" fill="#3a729b"/>
<rect x="1698.1" y="1394.9" width="108" height="1.6" fill="#a8e0f5" fill-opacity="0.22"/>
<rect x="1698.1" y="1430.5" width="108" height="1.6" fill="#a8e0f5" fill-opacity="0.22"/>
<rect x="1698.1" y="1482.8" width="108" height="1.6" fill="#a8e0f5" fill-opacity="0.22"/>
<rect x="1698.1" y="1511.6" width="108" height="1.6" fill="#a8e0f5" fill-opacity="0.22"/>
<rect x="1698.1" y="1649.4" width="108" height="1.6" fill="#a8e0f5" fill-opacity="0.22"/>
</g>
<clipPath id="cb1166_6"><path d="M1854.6 1693.7V1361.5a8 8 0 0 1 8 -8h92a8 8 0 0 1 8 8V1693.7Z"/></clipPath><g clip-path="url(#cb1166_6)">
<rect x="1854.6" y="1353.5" width="108" height="42.2" fill="#a6d690"/>
<rect x="1854.6" y="1395.7" width="108" height="35.6" fill="#8bc694"/>
<rect x="1854.6" y="1431.3" width="108" height="52.3" fill="#6db39a"/>
<rect x="1854.6" y="1483.6" width="108" height="28.8" fill="#569fa5"/>
<rect x="1854.6" y="1512.4" width="108" height="137.8" fill="#4389ad"/>
<rect x="1854.6" y="1650.2" width="108" height="43.5" fill="#3a729b"/>
<rect x="1854.6" y="1394.9" width="108" height="1.6" fill="#a8e0f5" fill-opacity="0.22"/>
<rect x="1854.6" y="1430.5" width="108" height="1.6" fill="#a8e0f5" fill-opacity="0.22"/>
<rect x="1854.6" y="1482.8" width="108" height="1.6" fill="#a8e0f5" fill-opacity="0.22"/>
<rect x="1854.6" y="1511.6" width="108" height="1.6" fill="#a8e0f5" fill-opacity="0.22"/>
<rect x="1854.6" y="1649.4" width="108" height="1.6" fill="#a8e0f5" fill-opacity="0.22"/>
</g>
<clipPath id="cb1166_7"><path d="M2011.1 1693.7V1361.5a8 8 0 0 1 8 -8h92a8 8 0 0 1 8 8V1693.7Z"/></clipPath><g clip-path="url(#cb1166_7)">
<rect x="2011.1" y="1353.5" width="108" height="42.2" fill="#a6d690"/>
<rect x="2011.1" y="1395.7" width="108" height="35.6" fill="#8bc694"/>
<rect x="2011.1" y="1431.3" width="108" height="52.3" fill="#6db39a"/>
<rect x="2011.1" y="1483.6" width="108" height="28.8" fill="#569fa5"/>
<rect x="2011.1" y="1512.4" width="108" height="137.8" fill="#4389ad"/>
<rect x="2011.1" y="1650.2" width="108" height="43.5" fill="#3a729b"/>
<rect x="2011.1" y="1394.9" width="108" height="1.6" fill="#a8e0f5" fill-opacity="0.22"/>
<rect x="2011.1" y="1430.5" width="108" height="1.6" fill="#a8e0f5" fill-opacity="0.22"/>
<rect x="2011.1" y="1482.8" width="108" height="1.6" fill="#a8e0f5" fill-opacity="0.22"/>
<rect x="2011.1" y="1511.6" width="108" height="1.6" fill="#a8e0f5" fill-opacity="0.22"/>
<rect x="2011.1" y="1649.4" width="108" height="1.6" fill="#a8e0f5" fill-opacity="0.22"/>
</g>
<clipPath id="cb1166_8"><path d="M2167.5 1693.7V1361.5a8 8 0 0 1 8 -8h92a8 8 0 0 1 8 8V1693.7Z"/></clipPath><g clip-path="url(#cb1166_8)">
<rect x="2167.5" y="1353.5" width="108" height="42.2" fill="#a6d690"/>
<rect x="2167.5" y="1395.7" width="108" height="35.6" fill="#8bc694"/>
<rect x="2167.5" y="1431.3" width="108" height="52.3" fill="#6db39a"/>
<rect x="2167.5" y="1483.6" width="108" height="28.8" fill="#569fa5"/>
<rect x="2167.5" y="1512.4" width="108" height="137.8" fill="#4389ad"/>
<rect x="2167.5" y="1650.2" width="108" height="43.5" fill="#3a729b"/>
<rect x="2167.5" y="1394.9" width="108" height="1.6" fill="#a8e0f5" fill-opacity="0.22"/>
<rect x="2167.5" y="1430.5" width="108" height="1.6" fill="#a8e0f5" fill-opacity="0.22"/>
<rect x="2167.5" y="1482.8" width="108" height="1.6" fill="#a8e0f5" fill-opacity="0.22"/>
<rect x="2167.5" y="1511.6" width="108" height="1.6" fill="#a8e0f5" fill-opacity="0.22"/>
<rect x="2167.5" y="1649.4" width="108" height="1.6" fill="#a8e0f5" fill-opacity="0.22"/>
</g>
<clipPath id="cb1166_9"><path d="M2324.0 1693.7V1361.5a8 8 0 0 1 8 -8h92a8 8 0 0 1 8 8V1693.7Z"/></clipPath><g clip-path="url(#cb1166_9)">
<rect x="2324.0" y="1353.5" width="108" height="42.2" fill="#a6d690"/>
<rect x="2324.0" y="1395.7" width="108" height="35.6" fill="#8bc694"/>
<rect x="2324.0" y="1431.3" width="108" height="52.3" fill="#6db39a"/>
<rect x="2324.0" y="1483.6" width="108" height="28.8" fill="#569fa5"/>
<rect x="2324.0" y="1512.4" width="108" height="137.8" fill="#4389ad"/>
<rect x="2324.0" y="1650.2" width="108" height="43.5" fill="#3a729b"/>
<rect x="2324.0" y="1394.9" width="108" height="1.6" fill="#a8e0f5" fill-opacity="0.22"/>
<rect x="2324.0" y="1430.5" width="108" height="1.6" fill="#a8e0f5" fill-opacity="0.22"/>
<rect x="2324.0" y="1482.8" width="108" height="1.6" fill="#a8e0f5" fill-opacity="0.22"/>
<rect x="2324.0" y="1511.6" width="108" height="1.6" fill="#a8e0f5" fill-opacity="0.22"/>
<rect x="2324.0" y="1649.4" width="108" height="1.6" fill="#a8e0f5" fill-opacity="0.22"/>
</g>
<clipPath id="cb1166_10"><path d="M2480.4 1693.7V1361.5a8 8 0 0 1 8 -8h92a8 8 0 0 1 8 8V1693.7Z"/></clipPath><g clip-path="url(#cb1166_10)">
<rect x="2480.4" y="1353.5" width="108" height="42.2" fill="#a6d690"/>
<rect x="2480.4" y="1395.7" width="108" height="35.6" fill="#8bc694"/>
<rect x="2480.4" y="1431.3" width="108" height="52.3" fill="#6db39a"/>
<rect x="2480.4" y="1483.6" width="108" height="28.8" fill="#569fa5"/>
<rect x="2480.4" y="1512.4" width="108" height="137.8" fill="#4389ad"/>
<rect x="2480.4" y="1650.2" width="108" height="43.5" fill="#3a729b"/>
<rect x="2480.4" y="1394.9" width="108" height="1.6" fill="#a8e0f5" fill-opacity="0.22"/>
<rect x="2480.4" y="1430.5" width="108" height="1.6" fill="#a8e0f5" fill-opacity="0.22"/>
<rect x="2480.4" y="1482.8" width="108" height="1.6" fill="#a8e0f5" fill-opacity="0.22"/>
<rect x="2480.4" y="1511.6" width="108" height="1.6" fill="#a8e0f5" fill-opacity="0.22"/>
<rect x="2480.4" y="1649.4" width="108" height="1.6" fill="#a8e0f5" fill-opacity="0.22"/>
</g>
<clipPath id="cb1166_11"><path d="M2636.9 1693.7V1361.5a8 8 0 0 1 8 -8h92a8 8 0 0 1 8 8V1693.7Z"/></clipPath><g clip-path="url(#cb1166_11)">
<rect x="2636.9" y="1353.5" width="108" height="42.2" fill="#a6d690"/>
<rect x="2636.9" y="1395.7" width="108" height="35.6" fill="#8bc694"/>
<rect x="2636.9" y="1431.3" width="108" height="52.3" fill="#6db39a"/>
<rect x="2636.9" y="1483.6" width="108" height="28.8" fill="#569fa5"/>
<rect x="2636.9" y="1512.4" width="108" height="137.8" fill="#4389ad"/>
<rect x="2636.9" y="1650.2" width="108" height="43.5" fill="#3a729b"/>
<rect x="2636.9" y="1394.9" width="108" height="1.6" fill="#a8e0f5" fill-opacity="0.22"/>
<rect x="2636.9" y="1430.5" width="108" height="1.6" fill="#a8e0f5" fill-opacity="0.22"/>
<rect x="2636.9" y="1482.8" width="108" height="1.6" fill="#a8e0f5" fill-opacity="0.22"/>
<rect x="2636.9" y="1511.6" width="108" height="1.6" fill="#a8e0f5" fill-opacity="0.22"/>
<rect x="2636.9" y="1649.4" width="108" height="1.6" fill="#a8e0f5" fill-opacity="0.22"/>
</g>
<clipPath id="cb1166_12"><path d="M2793.4 1693.7V1361.5a8 8 0 0 1 8 -8h92a8 8 0 0 1 8 8V1693.7Z"/></clipPath><g clip-path="url(#cb1166_12)">
<rect x="2793.4" y="1353.5" width="108" height="42.2" fill="#a6d690"/>
<rect x="2793.4" y="1395.7" width="108" height="35.6" fill="#8bc694"/>
<rect x="2793.4" y="1431.3" width="108" height="52.3" fill="#6db39a"/>
<rect x="2793.4" y="1483.6" width="108" height="28.8" fill="#569fa5"/>
<rect x="2793.4" y="1512.4" width="108" height="137.8" fill="#4389ad"/>
<rect x="2793.4" y="1650.2" width="108" height="43.5" fill="#3a729b"/>
<rect x="2793.4" y="1394.9" width="108" height="1.6" fill="#a8e0f5" fill-opacity="0.22"/>
<rect x="2793.4" y="1430.5" width="108" height="1.6" fill="#a8e0f5" fill-opacity="0.22"/>
<rect x="2793.4" y="1482.8" width="108" height="1.6" fill="#a8e0f5" fill-opacity="0.22"/>
<rect x="2793.4" y="1511.6" width="108" height="1.6" fill="#a8e0f5" fill-opacity="0.22"/>
<rect x="2793.4" y="1649.4" width="108" height="1.6" fill="#a8e0f5" fill-opacity="0.22"/>
</g>
</svg>
<div class="t" style="left:162.00px;top:1196.58px;font-size:25.3px;color:#666666;font-weight:normal;letter-spacing:-1.000px;">$120K</div>
<div class="t" style="left:171.80px;top:1275.28px;font-size:25.3px;color:#666666;font-weight:normal;letter-spacing:0.067px;">$90K</div>
<div class="t" style="left:171.80px;top:1362.58px;font-size:25.3px;color:#666666;font-weight:normal;letter-spacing:0.067px;">$60K</div>
<div class="t" style="left:171.80px;top:1449.38px;font-size:25.3px;color:#666666;font-weight:normal;letter-spacing:0.067px;">$30K</div>
<div class="t" style="left:202.60px;top:1536.38px;font-size:25.3px;color:#666666;font-weight:normal;letter-spacing:0.275px;">$0</div>
<div class="t" style="left:295.24px;top:1576.78px;font-size:25.3px;color:#666666;font-weight:normal;letter-spacing:0.300px;">Feb &#x27;26</div>
<div class="t" style="left:451.70px;top:1576.78px;font-size:25.3px;color:#666666;font-weight:normal;letter-spacing:0.300px;">Mar &#x27;26</div>
<div class="t" style="left:610.23px;top:1576.78px;font-size:25.3px;color:#666666;font-weight:normal;letter-spacing:0.300px;">Apr &#x27;26</div>
<div class="t" style="left:762.50px;top:1576.78px;font-size:25.3px;color:#666666;font-weight:normal;letter-spacing:0.300px;">May &#x27;26</div>
<div class="t" style="left:922.46px;top:1576.78px;font-size:25.3px;color:#666666;font-weight:normal;letter-spacing:0.300px;">Jun &#x27;26</div>
<div class="t" style="left:1083.11px;top:1576.78px;font-size:25.3px;color:#666666;font-weight:normal;letter-spacing:0.300px;">Jul &#x27;26</div>
<div class="t" style="left:1233.26px;top:1576.78px;font-size:25.3px;color:#666666;font-weight:normal;letter-spacing:0.300px;">Aug &#x27;26</div>
<div class="t" style="left:1389.72px;top:1576.78px;font-size:25.3px;color:#666666;font-weight:normal;letter-spacing:0.300px;">Sep &#x27;26</div>
<div class="t" style="left:1549.00px;top:1576.78px;font-size:25.3px;color:#666666;font-weight:normal;letter-spacing:0.300px;">Oct &#x27;26</div>
<div class="t" style="left:1702.65px;top:1576.78px;font-size:25.3px;color:#666666;font-weight:normal;letter-spacing:0.300px;">Nov &#x27;26</div>
<div class="t" style="left:1859.11px;top:1576.78px;font-size:25.3px;color:#666666;font-weight:normal;letter-spacing:0.300px;">Dec &#x27;26</div>
<div class="t" style="left:2017.70px;top:1576.78px;font-size:25.3px;color:#666666;font-weight:normal;letter-spacing:0.300px;">Jan &#x27;27</div>
<div class="t" style="left:2172.78px;top:1576.78px;font-size:25.3px;color:#666666;font-weight:normal;letter-spacing:0.300px;">Feb &#x27;27</div>
<div class="abs" style="left:218.0px;top:1657.0px;width:16px;height:16px;border-radius:4px;background:#2a4b73"></div>
<div class="t" style="left:246.70px;top:1651.58px;font-size:25.3px;color:#0a0a0a;font-weight:normal;letter-spacing:-0.007px;">Not assigned</div>
<div class="abs" style="left:426.2px;top:1657.0px;width:16px;height:16px;border-radius:4px;background:#335d8c"></div>
<div class="t" style="left:455.80px;top:1651.58px;font-size:25.3px;color:#0a0a0a;font-weight:normal;letter-spacing:0.585px;">dfsddf</div>
<div class="abs" style="left:560.7px;top:1657.0px;width:16px;height:16px;border-radius:4px;background:#3a729b"></div>
<div class="t" style="left:589.40px;top:1651.58px;font-size:25.3px;color:#0a0a0a;font-weight:normal;letter-spacing:-0.049px;">MKT PL - Ads&amp;Promo</div>
<div class="abs" style="left:867.3px;top:1657.0px;width:16px;height:16px;border-radius:4px;background:#4389ad"></div>
<div class="t" style="left:896.00px;top:1651.58px;font-size:25.3px;color:#0a0a0a;font-weight:normal;letter-spacing:0.080px;">MKT PL - Services</div>
<div class="abs" style="left:1139.7px;top:1657.0px;width:16px;height:16px;border-radius:4px;background:#569fa5"></div>
<div class="t" style="left:1168.70px;top:1651.58px;font-size:25.3px;color:#0a0a0a;font-weight:normal;letter-spacing:0.119px;">MKT PL - Tools</div>
<div class="abs" style="left:1374.0px;top:1657.0px;width:16px;height:16px;border-radius:4px;background:#6db39a"></div>
<div class="t" style="left:1403.00px;top:1651.58px;font-size:25.3px;color:#0a0a0a;font-weight:normal;letter-spacing:-0.053px;">MKT Z- Ads&amp;Promo</div>
<div class="abs" style="left:1659.0px;top:1657.0px;width:16px;height:16px;border-radius:4px;background:#8bc694"></div>
<div class="t" style="left:1688.00px;top:1651.58px;font-size:25.3px;color:#0a0a0a;font-weight:normal;letter-spacing:0.147px;">MKT Z - Services</div>
<div class="abs" style="left:1916.6px;top:1657.0px;width:16px;height:16px;border-radius:4px;background:#a6d690"></div>
<div class="t" style="left:1945.50px;top:1651.58px;font-size:25.3px;color:#0a0a0a;font-weight:normal;letter-spacing:0.096px;">MKT Z - Services (TL)</div>
<div class="card" style="left:60px;top:1789px;width:2293px;height:600px"></div>
</div>
</body></html>
